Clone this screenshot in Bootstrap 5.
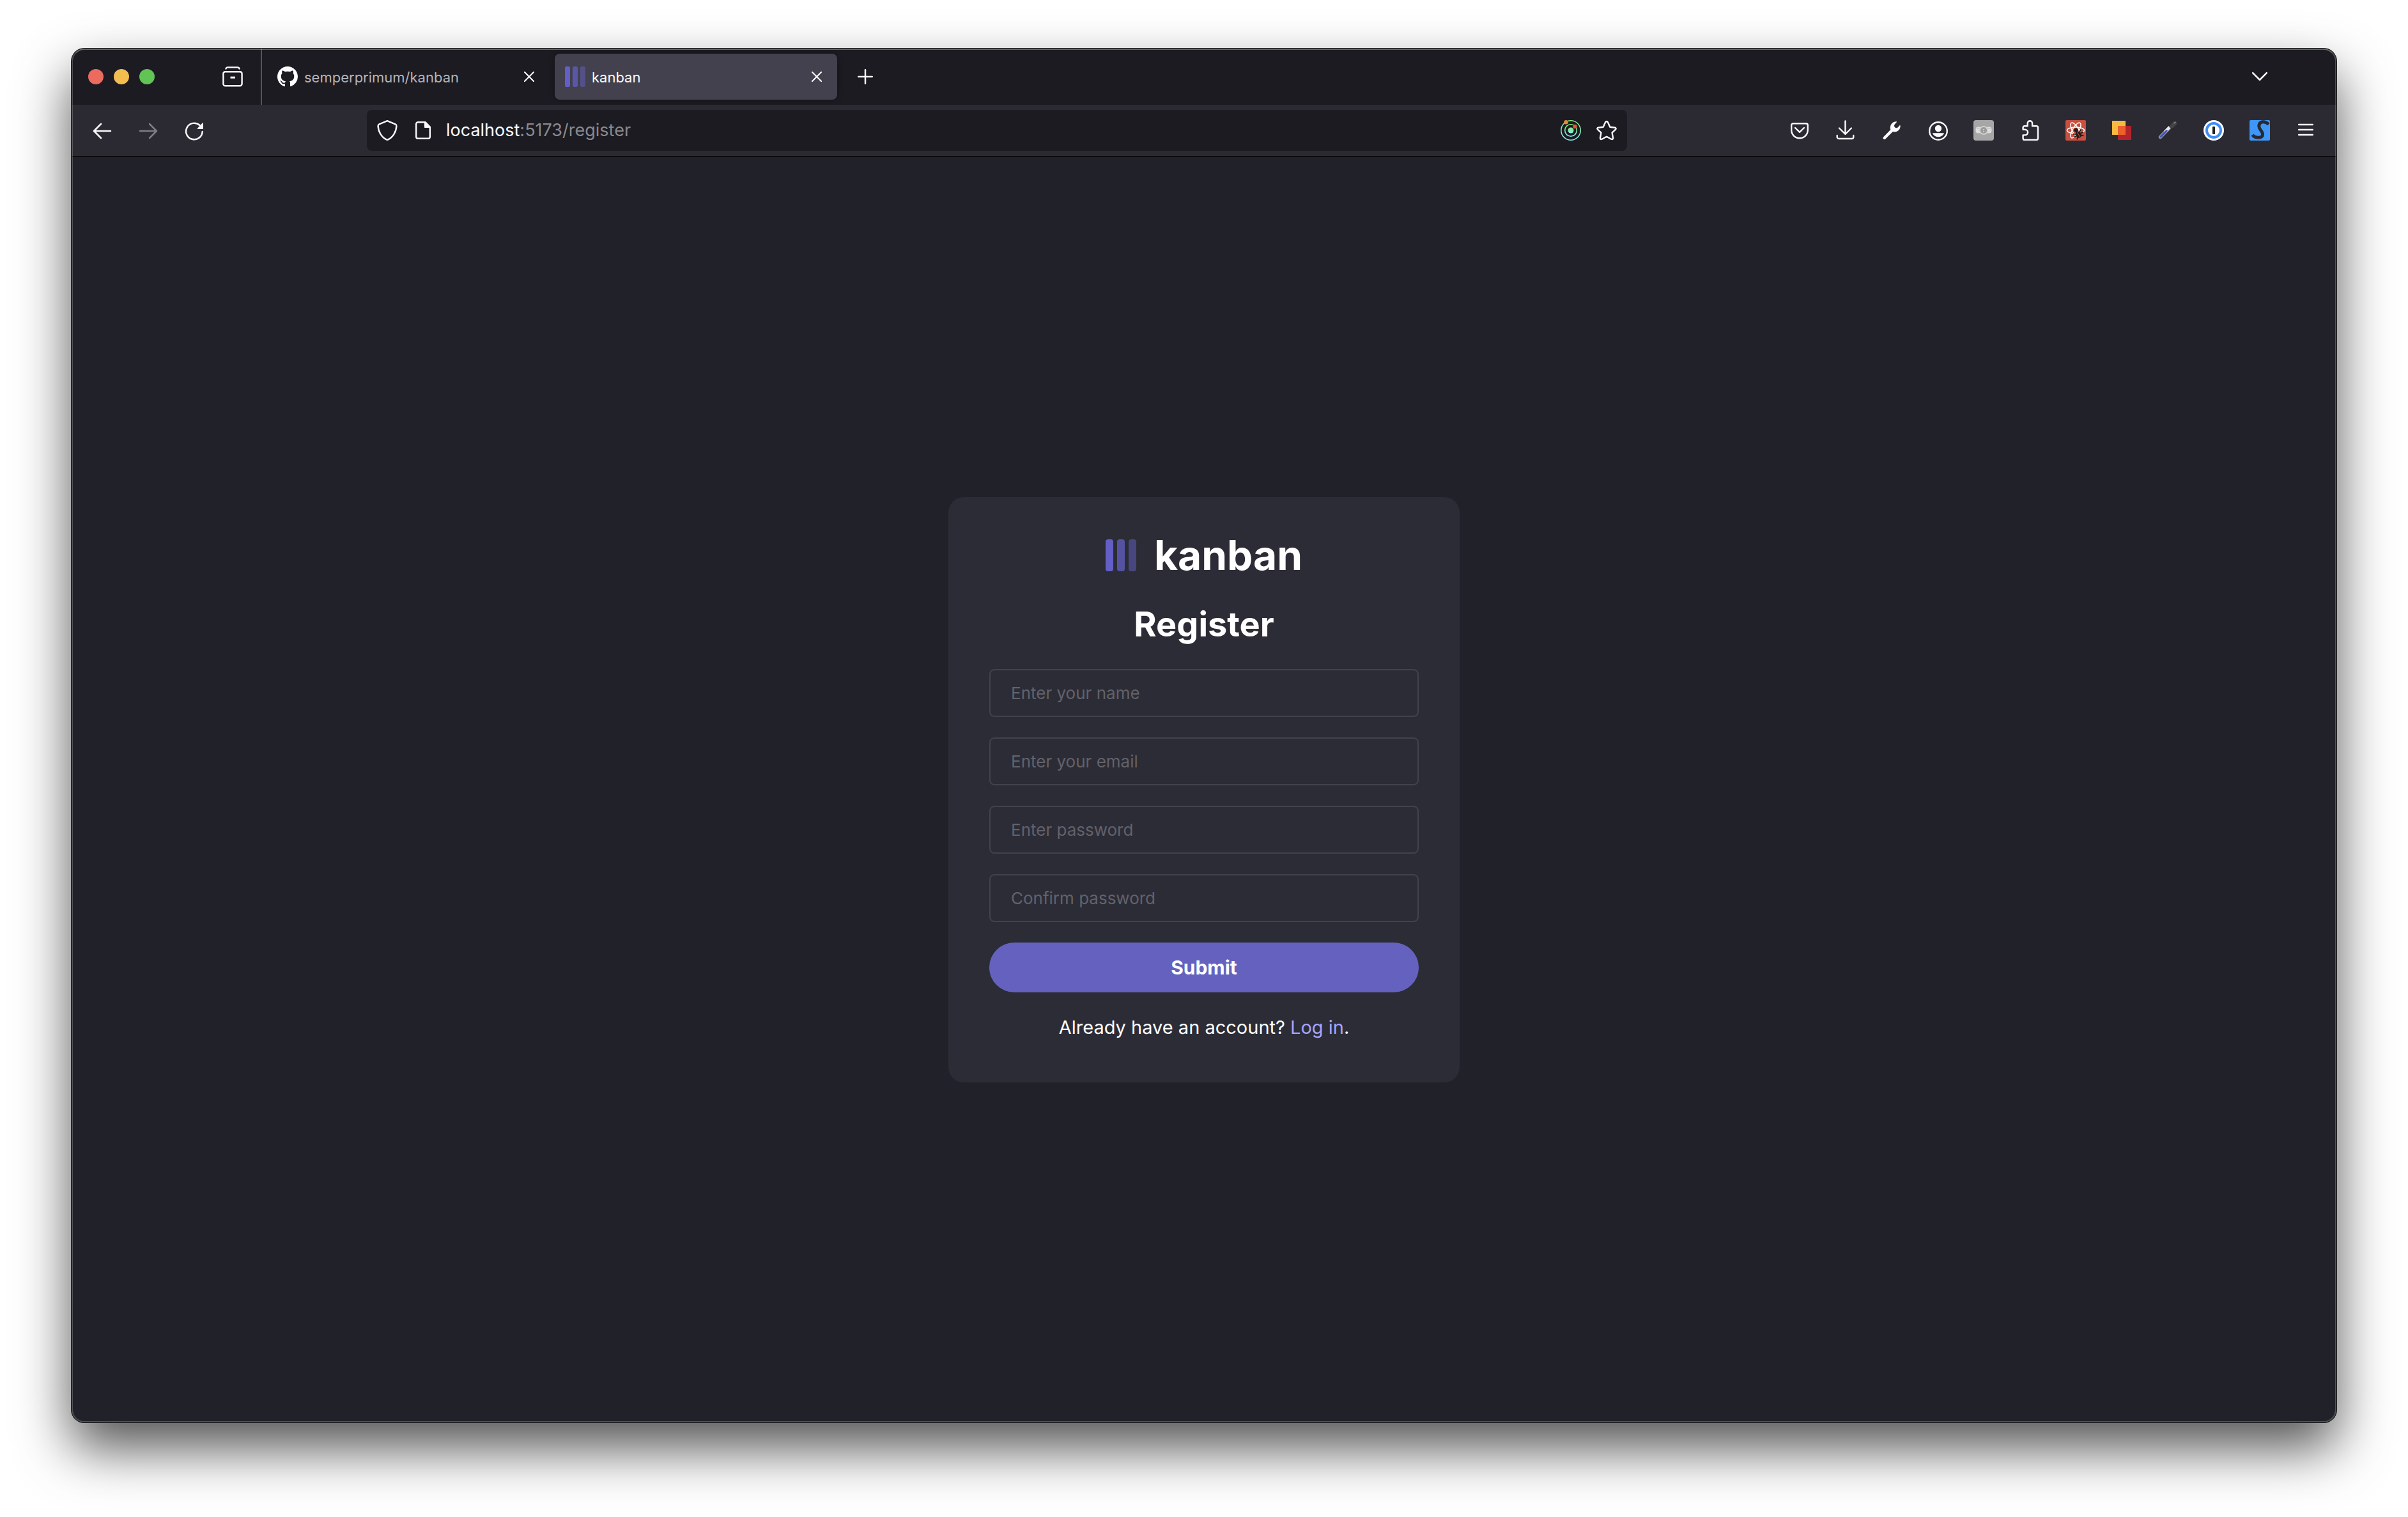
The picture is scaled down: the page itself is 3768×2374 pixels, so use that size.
<!DOCTYPE html>
<html lang="en">
<head>
<meta charset="utf-8">
<meta name="viewport" content="width=device-width, initial-scale=1">
<title>kanban</title>
<link href="https://cdn.jsdelivr.net/npm/bootstrap@5.3.0/dist/css/bootstrap.min.css" rel="stylesheet">
<style>
  body { background: #fff; color: #fff; font-family: Inter, "Liberation Sans", sans-serif; padding: 76px 112px 148px; }
  svg { display: block; flex: none; }
  .ln { fill: none; stroke: currentColor; stroke-linecap: round; stroke-linejoin: round; }

  .win { border-radius: 20px; background: #21212a; box-shadow: 0 0 0 1px #0a0c0a, 0 40px 84px rgba(0,0,0,.68); }
  .win::after { content: ""; position: absolute; inset: 0; border: 2px solid rgba(255,255,255,.22); border-top-color: rgba(214,228,214,.4); border-radius: inherit; pointer-events: none; }
  .ico { border: 0; background: none; padding: 0; color: #fbfbfe; display: flex; align-items: center; justify-content: center; }

  .tabstrip { height: 88px; background: #1c1b22; }
  .lights { gap: 16px; padding: 0 86px 0 26px; }
  .light { width: 24px; height: 24px; border-radius: 50%; border: 0; padding: 0; }
  .archive { width: 72px; height: 72px; }
  .tabs { border-left: 2px solid #56555b; padding-left: 8px; gap: 8px; }
  .browser-tab { width: 442px; height: 72px; border-radius: 8px; padding: 0 24px 0 16px; gap: 10px; color: #b5b4ba; font-size: 22px; line-height: 32px; }
  .browser-tab a { color: inherit; text-decoration: none; gap: 10px; }
  .browser-tab span { padding-top: 2px; }
  .browser-tab.current { background: #42414d; color: #fbfbfe; box-shadow: 0 0 8px rgba(0,0,0,.4); }
  .newtab { width: 72px; height: 72px; }
  .alltabs { width: 72px; height: 72px; margin-right: 84px; }

  .toolbar { height: 82px; background: #2b2a33; border-bottom: 2px solid #0c0c0d; padding: 0 12px; }
  .toolbar > .ico { width: 72px; height: 72px; flex: none; }
  .toolbar > .ico:disabled { color: #7d7c82; }
  .spring { width: 234px; }
  .urlbar { height: 64px; border-radius: 8px; background: #1c1b22; padding: 0 16px; gap: 24px; }
  .url { font-size: 27px; line-height: 40px; color: #8a898e; white-space: nowrap; outline: 0; margin-left: -4px; }
  .url b { font-weight: 400; color: #fbfbfe; }

  .panel { width: 800px; border-radius: 24px; background: #2c2c36; padding: 53px 64px 64px; gap: 32px; }
  .brand { gap: 28px; font-size: 64px; line-height: 76px; font-weight: 700; margin: 0; }
  .panel h2 { font-size: 54px; line-height: 76px; font-weight: 700; margin: 0; }
  .field { height: 75px; border: 2px solid #41424d; border-radius: 8px; background: transparent; padding: 0 32px; font-size: 26px; color: #fff; }
  .field:focus { background: transparent; color: #fff; border-color: #6562bf; box-shadow: none; }
  .field::placeholder { color: #62626b; opacity: 1; }
  .send { height: 78px; border: 0; border-radius: 40px; background: #6562bf; color: #fff; font-size: 30px; line-height: 40px; font-weight: 700; }
  .send:hover { background: #a8a4ff; color: #fff; }
  .switch-line { font-size: 29px; line-height: 45px; margin: 0; }
  .switch-line a { color: #a8a4ff; text-decoration: none; }
</style>
<script src="https://cdn.jsdelivr.net/npm/bootstrap@5.3.0/dist/js/bootstrap.bundle.min.js"></script>
</head>
<body class="min-vh-100 d-flex flex-column">
<div class="win position-relative flex-grow-1 d-flex flex-column overflow-hidden">

  <div class="tabstrip d-flex align-items-center">
    <div class="lights d-flex align-items-center">
      <button class="light" style="background:#ed6a5e" aria-label="Close window"></button>
      <button class="light" style="background:#f4bd4f" aria-label="Minimise"></button>
      <button class="light" style="background:#61c454" aria-label="Full screen"></button>
    </div>
    <button class="ico archive me-2" aria-label="Recent browsing">
      <svg width="32" height="32" viewBox="0 0 32 32" class="ln" stroke-width="2.4"><path d="M5.500 3.500C6 1.800 7 1.400 8.200 1.400h15.600c1.300 0 2.300.4 2.700 2.100"/><rect x="1.400" y="8.200" width="29.200" height="22" rx="3"/><path d="M12.500 17.200h7.500" stroke-linecap="butt" stroke-width="3"/></svg>
    </button>
    <nav class="tabs d-flex align-items-center align-self-stretch" aria-label="Tabs">
      <div class="browser-tab d-flex align-items-center justify-content-between">
        <a href="#" class="d-flex align-items-center">
          <svg width="32" height="32" viewBox="0 0 16 16" fill="#fff"><path d="M8 0C3.580 0 0 3.580 0 8c0 3.540 2.290 6.530 5.470 7.590.4.070.55-.17.55-.38 0-.19-.01-.82-.01-1.490-2.010.37-2.530-.49-2.690-.94-.09-.23-.48-.94-.82-1.130-.28-.15-.68-.52-.01-.53.63-.01 1.080.58 1.230.82.72 1.210 1.870.87 2.330.66.070-.52.28-.87.51-1.070-1.780-.2-3.640-.89-3.640-3.950 0-.87.31-1.590.82-2.150-.08-.2-.36-1.020.08-2.120 0 0 .67-.21 2.200.82.64-.18 1.320-.27 2-.27s1.360.09 2 .27c1.530-1.040 2.200-.82 2.200-.82.44 1.100.16 1.920.08 2.120.51.56.82 1.270.82 2.150 0 3.070-1.870 3.750-3.650 3.950.29.25.54.73.54 1.480 0 1.070-.01 1.930-.01 2.200 0 .21.15.46.55.38A8.010 8.010 0 0 0 16 8c0-4.420-3.580-8-8-8"/></svg>
          <span>semperprimum/kanban</span></a>
        <button class="ico" aria-label="Close tab"><svg width="16" height="16" viewBox="0 0 16 16" class="ln" stroke-width="2"><path d="M.8.8l14.400 14.400M15.200.8.8 15.200"/></svg></button>
      </div>
      <div class="browser-tab current d-flex align-items-center justify-content-between">
        <a href="#" class="d-flex align-items-center" aria-current="page">
          <svg width="32" height="32" viewBox="0 0 32 32" fill="#635fc7"><rect width="8" height="32" rx="2.500"/><rect x="12" width="8" height="32" rx="2.500" opacity=".75"/><rect x="24" width="8" height="32" rx="2.500" opacity=".5"/></svg>
          <span>kanban</span></a>
        <button class="ico" aria-label="Close tab"><svg width="16" height="16" viewBox="0 0 16 16" class="ln" stroke-width="2"><path d="M.8.8l14.400 14.400M15.200.8.8 15.200"/></svg></button>
      </div>
    </nav>
    <button class="ico newtab ms-2" aria-label="New tab"><svg width="24" height="24" viewBox="0 0 24 24" class="ln" stroke-width="2.500"><path d="M12 1.200v21.600M1.200 12h21.600"/></svg></button>
    <button class="ico alltabs ms-auto" aria-label="List all tabs"><svg width="24" height="24" viewBox="0 0 24 24" class="ln" stroke-width="2.500"><path d="M1.200 6.200 12 17 22.800 6.200"/></svg></button>
  </div>

  <div class="toolbar d-flex align-items-center">
    <button class="ico" aria-label="Back"><svg width="32" height="32" viewBox="0 0 32 32" class="ln" stroke-width="2.500"><path d="M29 17H3.500M14 6 3 17l11 11"/></svg></button>
    <button class="ico" aria-label="Forward" disabled><svg width="32" height="32" viewBox="0 0 32 32" class="ln" stroke-width="2.500"><path d="M3 17h25.500M18 6l11 11-11 11"/></svg></button>
    <button class="ico" aria-label="Reload"><svg width="32" height="32" viewBox="0 0 32 32" class="ln" stroke-width="2.500"><path d="M28.700 18A12.800 12.800 0 1 1 24.500 8"/><path d="M30 5v8.600a.5.5 0 0 1-.5.500H21.500c-.7 0-1-.8-.5-1.300l7.800-8.300c.5-.5 1.200-.2 1.200.5z" fill="currentColor" stroke="none"/></svg></button>
    <div class="spring"></div>
    <div class="urlbar d-flex align-items-center flex-grow-1">
      <button class="ico" aria-label="Tracking protection"><svg width="32" height="32" viewBox="0 0 32 32" class="ln" stroke-width="2.400"><path d="M16 1.200 28.600 6.400c1.200.5 1.800 1.300 1.800 2.600C30.200 18 25 26.500 17.400 30.400c-1 .5-1.800.5-2.800 0C7 26.500 1.800 18 1.600 9c0-1.300.6-2.100 1.800-2.600z"/></svg></button>
      <button class="ico" aria-label="Page information"><svg width="32" height="32" viewBox="0 0 32 32" class="ln" stroke-width="2.400"><path d="M8 3.200h11.500L26.800 10.500V26a2.800 2.800 0 0 1-2.800 2.800H8A2.800 2.800 0 0 1 5.200 26V6A2.800 2.800 0 0 1 8 3.200z"/><path d="M18.500 3v8.500H27z" fill="currentColor" stroke-width="1"/></svg></button>
      <div class="url flex-grow-1" role="textbox" contenteditable="true" spellcheck="false" aria-label="Address"><b>localhost</b>:5173/register</div>
      <button class="ico" aria-label="Query devtools"><svg width="32" height="32" viewBox="0 0 32 32" fill="none"><defs><linearGradient id="orbit" x1="0" y1="0" x2="0" y2="1"><stop offset="0" stop-color="#84ec7c"/><stop offset="1" stop-color="#84ecec"/></linearGradient></defs><circle cx="16" cy="16" r="15.200" stroke="url(#orbit)" stroke-width="1.600"/><circle cx="16" cy="16" r="9.300" stroke="url(#orbit)" stroke-width="1.600"/><circle cx="16" cy="16" r="4.500" fill="url(#orbit)"/><circle cx="8.500" cy="3.300" r="3.200" fill="#e58a3c"/><circle cx="22.500" cy="10" r="3.200" fill="#e0583a"/></svg></button>
      <button class="ico" aria-label="Bookmark"><svg width="32" height="32" viewBox="0 0 32 32" class="ln" stroke-width="2.400"><path d="M17.900 3.200 21.300 10.800 29 11.700C30.600 11.900 31.100 13.500 30 14.600L24.600 19.600 26 27.800C26.200 29.500 24.800 30.500 23.300 29.700L16 25.700 8.700 29.700C7.200 30.500 5.800 29.500 6 27.800L7.400 19.600 2 14.600C.9 13.500 1.400 11.900 3 11.700L10.700 10.800 14.100 3.200C14.900 1.600 17.100 1.600 17.900 3.200z"/></svg></button>
    </div>
    <div class="spring"></div>
    <button class="ico" aria-label="Pocket"><svg width="32" height="32" viewBox="0 0 32 32" class="ln" stroke-width="2.400"><path d="M6 5.200h20A2.800 2.800 0 0 1 28.800 8v7.500a12.800 12.800 0 0 1-25.600 0V8A2.800 2.800 0 0 1 6 5.200z"/><path d="M9 12l7 6.800 7-6.800"/></svg></button>
    <button class="ico" aria-label="Downloads"><svg width="32" height="32" viewBox="0 0 32 32" class="ln" stroke-width="2.400"><path d="M15.500 1.500v20M6 12.500 15.500 22l9.500-9.500M2.700 24v2.500a2.500 2.500 0 0 0 2.500 2.500h20.600a2.500 2.500 0 0 0 2.500-2.500V24"/></svg></button>
    <button class="ico" aria-label="Developer tools"><svg width="32" height="32" viewBox="0 0 32 32" fill="currentColor"><path d="M29.600 8.300c.4-.4.9-.2 1 .4.500 6.300-5.600 11.300-11.700 9.300L7.300 29.600c-2.200 1.800-4.800-.8-3.200-3L15.300 15C13.400 7.500 18.300 2 24.300 2.200c.7 0 .9.500.5 1l-2.900 3.200c-1.300 1.900-1.100 3.500.2 4.800s3.300 1.300 4.700.1z" transform="translate(-1 0)"/></svg></button>
    <button class="ico" aria-label="Account"><svg width="32" height="32" viewBox="0 0 32 32"><circle cx="17" cy="17" r="13.800" class="ln" stroke-width="2.400"/><circle cx="17" cy="13" r="5.200" fill="currentColor"/><path d="M8.800 20.300h16.400c.6 0 .8.500.5 1-3.600 6.700-13.800 6.700-17.400 0-.3-.5-.1-1 .5-1z" fill="currentColor"/></svg></button>
    <button class="ico" aria-label="Private mask extension"><svg width="32" height="32" viewBox="0 0 32 32"><rect width="32" height="32" rx="4" fill="#a6a6a6"/><g fill="#dcdcdc"><rect x="3.500" y="10.500" width="9" height="10" rx="4"/><rect x="19.500" y="10.500" width="9" height="10" rx="4"/></g><path d="M5 13.500q3-2 5 0M22 13.500q3-2 5 0" stroke="#bbb" fill="none"/><circle cx="16" cy="16" r="6" fill="#9b9b9b" stroke="#d0d0d0" stroke-width="1.800"/><path d="M15 14h2v1.500h-2zM15 17h2v1.500h-2z" fill="#d4d4d4"/></svg></button>
    <button class="ico" aria-label="Extensions"><svg width="32" height="32" viewBox="0 0 32 32" class="ln" stroke-width="2.400"><path d="M12.700 9.200V5a3.700 3.700 0 0 1 7.400 0v4.200h6.500a2.400 2.400 0 0 1 2.400 2.400v17A2.400 2.400 0 0 1 26.600 31H8a2.400 2.400 0 0 1-2.400-2.400v-5.200h3.200a4.300 4.300 0 0 0 0-8.600H5.600v-3.200A2.400 2.400 0 0 1 8 9.200z"/></svg></button>
    <button class="ico" aria-label="React developer tools"><svg width="32" height="32" viewBox="0 0 32 32"><rect width="32" height="32" rx="2" fill="#c9503f"/><g fill="none" stroke="#fff" stroke-width="1.500"><ellipse cx="16" cy="16" rx="13.500" ry="5"/><ellipse cx="16" cy="16" rx="13.500" ry="5" transform="rotate(60 16 16)"/><ellipse cx="16" cy="16" rx="13.500" ry="5" transform="rotate(120 16 16)"/></g><path d="M18 20l10-2v12H16z" fill="#c9503f"/><g transform="rotate(-30 19 20)"><circle cx="19" cy="15" r="3" fill="#1d1d1d"/><rect x="15" y="18" width="8" height="10" rx="3.500" fill="#1d1d1d"/><path d="M12 18l3.500 2M26 18l-3.500 2M11.500 23H15M23 23h3.500M13 28.500l3-2.500M25 28.500 22 26" stroke="#1d1d1d" stroke-width="1.800"/><path d="M19 19v8" stroke="#c9503f"/></g></svg></button>
    <button class="ico" aria-label="Layers extension"><svg width="32" height="32" viewBox="0 0 32 32"><path d="M1 1h21v22H1z" fill="#f5bb41"/><path d="M10 9h21v22H10z" fill="#b2232b"/><path d="M10 9h12v14H10z" fill="#ed5f2b"/></svg></button>
    <button class="ico" aria-label="Colour picker"><svg width="32" height="32" viewBox="0 0 32 32" stroke-linecap="round"><path d="M4.500 26.500 18.500 12" stroke="#8c8d96" stroke-width="5.500"/><path d="M12.500 17.500l6-6" stroke="#e9eaf0" stroke-width="4.500"/><path d="M5.300 25.700l9-9.200" stroke="#3f55bd" stroke-width="3"/><path d="M18 7.500l6.500 6.500" stroke="#252525" stroke-width="3"/><path d="M22 10l5-5" stroke="#444" stroke-width="6.500"/><path d="M26 4.500l2-1" stroke="#777" stroke-width="2"/></svg></button>
    <button class="ico" aria-label="Password manager"><svg width="32" height="32" viewBox="0 0 32 32"><circle cx="16" cy="16" r="16" fill="#fff"/><circle cx="16" cy="16" r="11" fill="#fff" stroke="#3f8df5" stroke-width="4"/><rect x="14" y="10" width="4" height="12" rx=".8" fill="#222"/></svg></button>
    <button class="ico" aria-label="Stylus extension"><svg width="32" height="32" viewBox="0 0 32 32"><rect width="32" height="32" rx="2" fill="#3e97f6"/><path d="M4.500 23c4 5.500 17 6.500 16-1.500C19.800 16 14.200 14.500 14.800 8.500 15.500 2.500 23 0 30 6.500" fill="none" stroke="#282833" stroke-width="5"/></svg></button>
    <button class="ico" aria-label="Menu"><svg width="24" height="24" viewBox="0 0 24 24" class="ln" stroke-width="2.500"><path d="M1.200 3h21.600M1.200 11h21.600M1.200 19h21.600"/></svg></button>
  </div>

  <main class="flex-grow-1 d-flex align-items-center justify-content-center">
    <form class="panel d-flex flex-column">
      <h1 class="brand d-flex align-items-center justify-content-center">
        <svg width="48" height="50" viewBox="0 0 48 50" fill="#635fc7"><rect width="12" height="50" rx="4"/><rect x="18" width="12" height="50" rx="4" opacity=".75"/><rect x="36" width="12" height="50" rx="4" opacity=".5"/></svg>
        <span>kanban</span>
      </h1>
      <h2 class="text-center">Register</h2>
      <input class="form-control field" type="text" aria-label="Name" placeholder="Enter your name">
      <input class="form-control field" type="email" aria-label="Email" placeholder="Enter your email">
      <input class="form-control field" type="password" aria-label="Password" placeholder="Enter password">
      <input class="form-control field" type="password" aria-label="Confirm password" placeholder="Confirm password">
      <button class="btn send" type="button">Submit</button>
      <p class="switch-line text-center">Already have an account? <a href="#">Log in</a>.</p>
    </form>
  </main>
</div>
</body>
</html>
